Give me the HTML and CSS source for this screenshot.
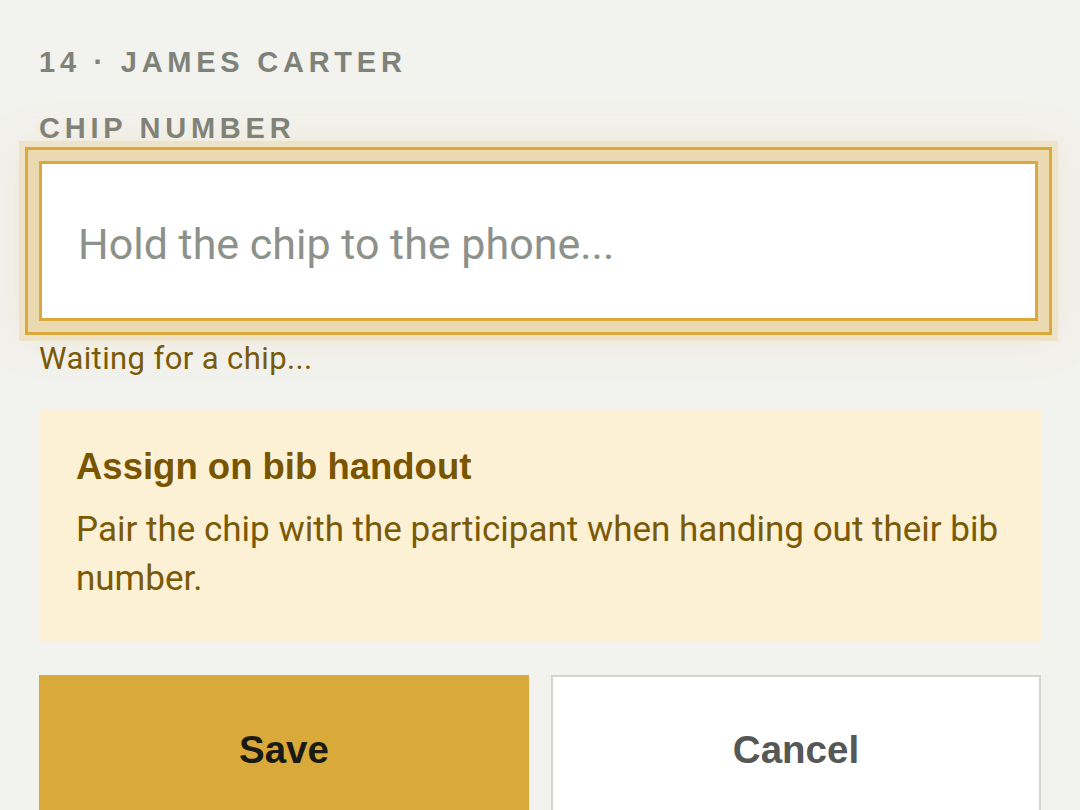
FILE: index.html
```html
<!DOCTYPE html>
<html lang="en">
<head>
<meta charset="utf-8">
<title>Assign chip</title>
<link rel="stylesheet" href="styles.css">
</head>
<body>
<main class="screen">
  <div class="eyebrow">14 · JAMES CARTER</div>
  <label class="field-label" for="chip">CHIP NUMBER</label>
  <input id="chip" class="chip-input" type="text" placeholder="Hold the chip to the phone...">
  <div class="status">Waiting for a chip...</div>
  <section class="notice">
    <h2 class="notice-title">Assign on bib handout</h2>
    <p class="notice-text">Pair the chip with the participant when handing out their bib number.</p>
  </section>
  <div class="actions">
    <button class="btn btn-primary" type="button">Save</button>
    <button class="btn btn-secondary" type="button">Cancel</button>
  </div>
</main>
</body>
</html>
```
FILE: styles.css
```css
html, body {
  margin: 0;
  padding: 0;
  background: #f2f2ee;
  height: 100%;
  overflow: hidden;
}

.screen {
  padding: 46px 39px 0 39px;
  display: flex;
  flex-direction: column;
}

.eyebrow,
.field-label {
  font-family: "Liberation Sans", Arial, sans-serif;
  font-weight: 700;
  font-size: 29px;
  line-height: 33px;
  letter-spacing: 4.75px;
  color: #7f8279;
  display: block;
}

.field-label {
  margin-top: 33px;
}

.chip-input {
  margin-top: 16px;
  box-sizing: border-box;
  width: calc(100% - 3px);
  height: 160px;
  border: 3px solid #d9a93a;
  background: #ffffff;
  padding: 6px 36px 0 36px;
  font-family: Roboto, "Noto Sans", sans-serif;
  font-size: 43px;
  color: #333;
  outline: none;
  border-radius: 0;
  box-shadow:
    0 0 0 11px #ebd9b1,
    0 0 0 14px #d9a93a,
    0 0 0 20px #eee3c7,
    0 0 40px 22px rgba(217, 169, 58, 0.10);
}

.chip-input::placeholder {
  color: #8d918b;
  opacity: 1;
}

.status {
  margin-top: 20px;
  font-family: Roboto, "Noto Sans", sans-serif;
  font-size: 31px;
  line-height: 36px;
  letter-spacing: 0.4px;
  color: #7a5a06;
}

.notice {
  margin-top: 32px;
  background: #fdf1d5;
  padding: 36px 37px 39px 37px;
}

.notice-title {
  margin: 0;
  font-family: "Liberation Sans", Arial, sans-serif;
  font-weight: 700;
  font-size: 36.5px;
  line-height: 43px;
  color: #7a5500;
}

.notice-text {
  margin: 17px 0 0 0;
  font-family: Roboto, "Noto Sans", sans-serif;
  font-size: 35px;
  line-height: 49px;
  color: #7a5a06;
}

.actions {
  margin-top: 33px;
  display: grid;
  grid-template-columns: 1fr 1fr;
  gap: 22px;
}

.btn {
  height: 150px;
  font-family: "Liberation Sans", Arial, sans-serif;
  font-weight: 700;
  font-size: 38.5px;
  border-radius: 0;
  cursor: pointer;
  padding: 0;
}

.btn-primary {
  background: #d9a93a;
  border: 2px solid #d9a93a;
  color: #1a1a14;
}

.btn-secondary {
  background: #ffffff;
  border: 2px solid #d6d4ce;
  color: #555855;
}
```
